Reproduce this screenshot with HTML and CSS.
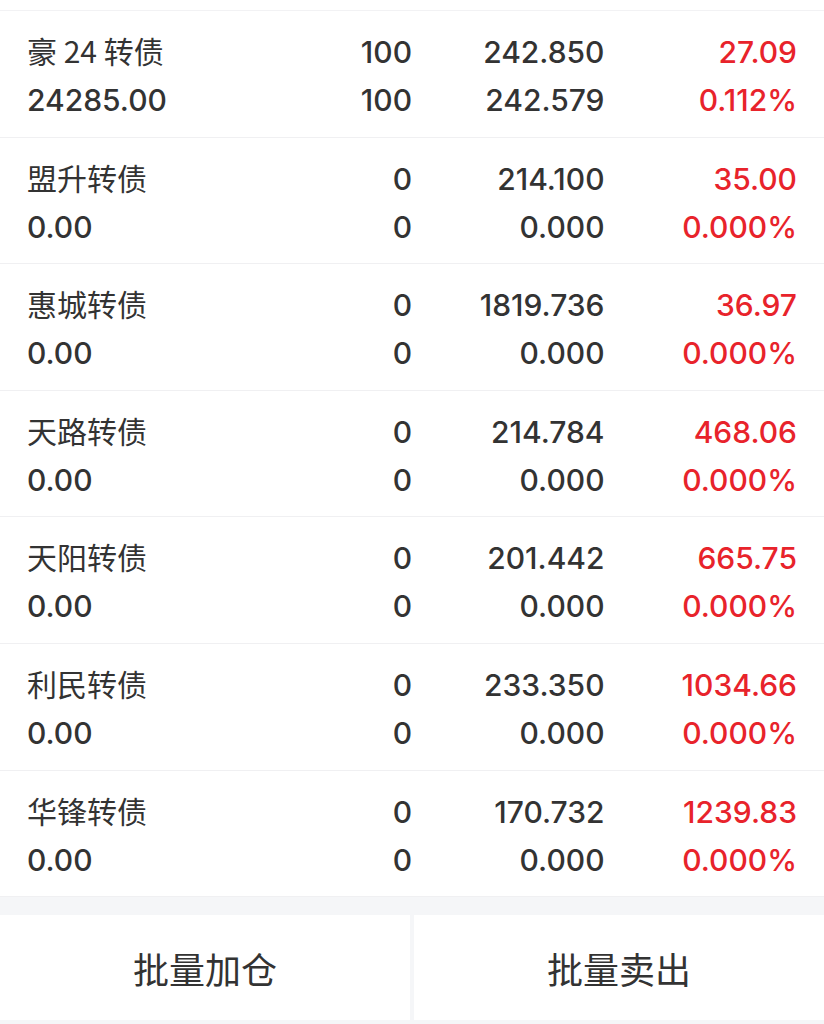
FILE: index.html
```html
<!DOCTYPE html>
<html lang="zh-CN">
<head>
<meta charset="UTF-8">
<meta name="viewport" content="width=device-width, initial-scale=1.0">
<title>转债持仓</title>
<link rel="stylesheet" href="styles.css">
</head>
<body>

<div class="list">
  <div class="row">
    <div class="name">豪 24 转债</div>
    <div class="num">100</div>
    <div class="num">242.850</div>
    <div class="num up">27.09</div>
    <div class="num first">24285.00</div>
    <div class="num">100</div>
    <div class="num">242.579</div>
    <div class="num up">0.112%</div>
  </div>
  <div class="row">
    <div class="name">盟升转债</div>
    <div class="num">0</div>
    <div class="num">214.100</div>
    <div class="num up">35.00</div>
    <div class="num first">0.00</div>
    <div class="num">0</div>
    <div class="num">0.000</div>
    <div class="num up">0.000%</div>
  </div>
  <div class="row">
    <div class="name">惠城转债</div>
    <div class="num">0</div>
    <div class="num">1819.736</div>
    <div class="num up">36.97</div>
    <div class="num first">0.00</div>
    <div class="num">0</div>
    <div class="num">0.000</div>
    <div class="num up">0.000%</div>
  </div>
  <div class="row">
    <div class="name">天路转债</div>
    <div class="num">0</div>
    <div class="num">214.784</div>
    <div class="num up">468.06</div>
    <div class="num first">0.00</div>
    <div class="num">0</div>
    <div class="num">0.000</div>
    <div class="num up">0.000%</div>
  </div>
  <div class="row">
    <div class="name">天阳转债</div>
    <div class="num">0</div>
    <div class="num">201.442</div>
    <div class="num up">665.75</div>
    <div class="num first">0.00</div>
    <div class="num">0</div>
    <div class="num">0.000</div>
    <div class="num up">0.000%</div>
  </div>
  <div class="row">
    <div class="name">利民转债</div>
    <div class="num">0</div>
    <div class="num">233.350</div>
    <div class="num up">1034.66</div>
    <div class="num first">0.00</div>
    <div class="num">0</div>
    <div class="num">0.000</div>
    <div class="num up">0.000%</div>
  </div>
  <div class="row">
    <div class="name">华锋转债</div>
    <div class="num">0</div>
    <div class="num">170.732</div>
    <div class="num up">1239.83</div>
    <div class="num first">0.00</div>
    <div class="num">0</div>
    <div class="num">0.000</div>
    <div class="num up">0.000%</div>
  </div>
</div>

<div class="actions">
  <button type="button" class="action-btn">批量加仓</button>
  <button type="button" class="action-btn">批量卖出</button>
</div>

</body>
</html>
```

FILE: styles.css
```css
body {
  margin: 0;
  background-color: #fff;
  font-family: Inter, "Noto Sans CJK SC", sans-serif;
  color: #333;
}

.list {
  margin-top: 10px;
  border-top: 1px solid #f2f2f4;
}

.row {
  display: grid;
  grid-template-columns: repeat(4, 1fr);
  align-content: start;
  box-sizing: border-box;
  height: 126.6px;
  padding: 17px 27px 0;
  border-bottom: 1px solid #f0f0f2;
  font-size: 30px;
  line-height: 48px;
}

.name {
  text-align: left;
  font-family: "Noto Sans CJK SC", sans-serif;
  font-weight: 400;
  white-space: nowrap;
  line-height: 44px;
}

.num {
  text-align: right;
  font-weight: 500;
}

.num.first {
  text-align: left;
}

.up {
  color: #e8232b;
}

.actions {
  display: grid;
  grid-template-columns: 1fr 1fr;
  column-gap: 4px;
  background-color: #f5f6f8;
  padding: 18px 0 4px;
}

.action-btn {
  height: 105px;
  border: none;
  background-color: #fff;
  font-family: "Noto Sans CJK SC", sans-serif;
  font-size: 36px;
  color: #333;
  padding: 0;
}
```
